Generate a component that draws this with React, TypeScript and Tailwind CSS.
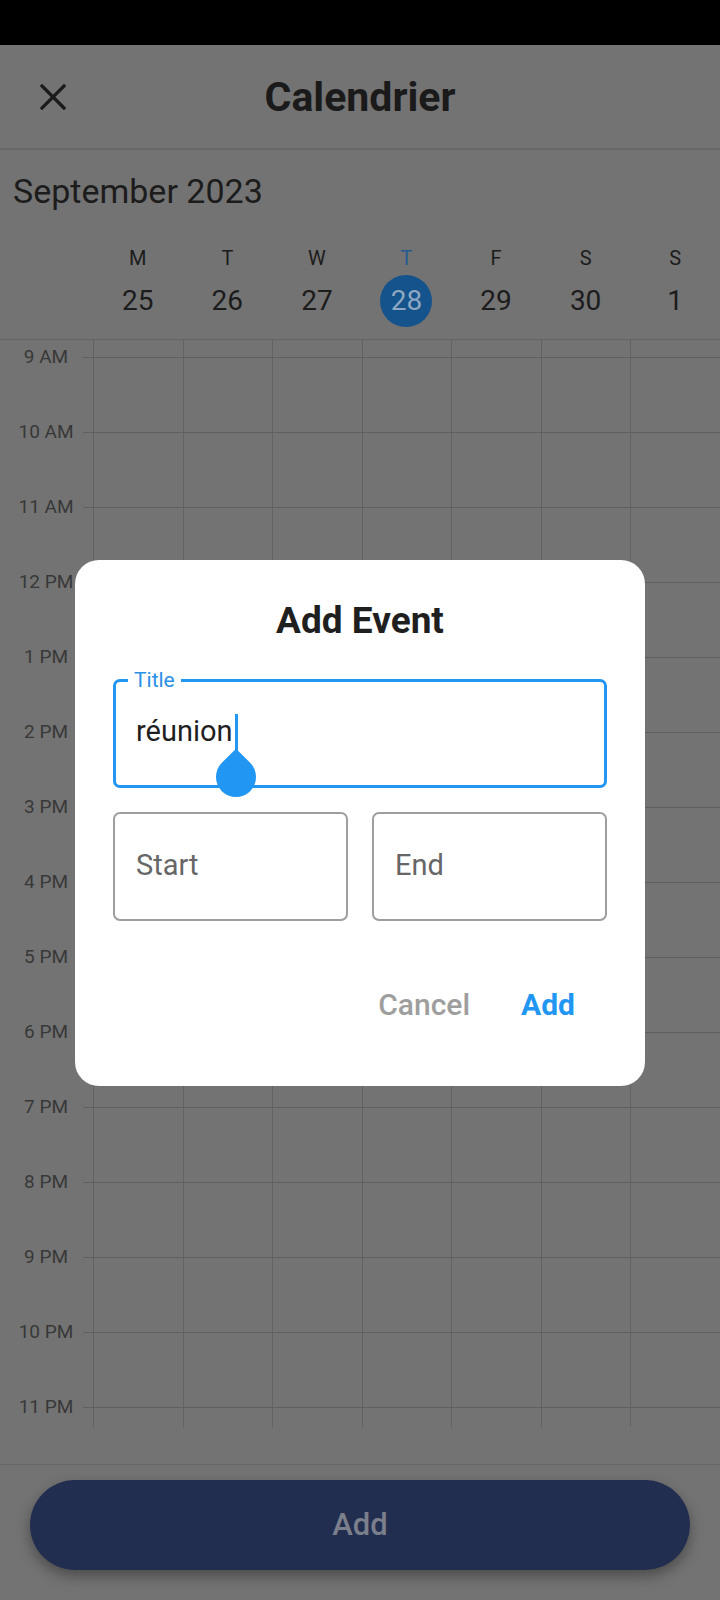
import React from 'react';

const days = [
  { letter: 'M', num: '25' },
  { letter: 'T', num: '26' },
  { letter: 'W', num: '27' },
  { letter: 'T', num: '28', today: true },
  { letter: 'F', num: '29' },
  { letter: 'S', num: '30' },
  { letter: 'S', num: '1' },
];

const hours = ['9 AM', '10 AM', '11 AM', '12 PM', '1 PM', '2 PM', '3 PM', '4 PM', '5 PM', '6 PM', '7 PM', '8 PM', '9 PM', '10 PM', '11 PM'];

function DayCells() {
  return (
    <div className="flex-1 grid grid-cols-7 h-full">
      {days.map((d, i) => (
        <div key={i} className="border-l border-[#626262] h-full" />
      ))}
    </div>
  );
}

function HourRow({ label, height }: { label: string; height: string }) {
  return (
    <div className={`flex ${height}`}>
      <div className="w-[83px] pl-[9px] text-center relative">
        <span className="block -translate-y-1/2 text-[19px] leading-[22px] text-[#383838]">{label}</span>
      </div>
      <div className="flex-1 flex border-t border-[#5f5f5f]">
        <div className="w-[10px]" />
        <DayCells />
      </div>
    </div>
  );
}

export default function App() {
  return (
    <div className="relative w-[720px] h-[1600px] bg-[#737373] overflow-hidden flex flex-col font-['Roboto',sans-serif]">
      {/* status bar */}
      <div className="h-[45px] bg-black shrink-0" />

      {/* app bar */}
      <div className="h-[105px] shrink-0 grid grid-cols-[105px_1fr_105px] items-center border-b-2 border-[#676767]">
        <div className="flex justify-center">
          <svg width="26" height="26" viewBox="0 0 26 26" fill="none" stroke="#1a1a1a" strokeWidth="3.2" strokeLinecap="square">
            <path d="M2 2 L24 24 M24 2 L2 24" />
          </svg>
        </div>
        <h1 className="text-center text-[41px] leading-[48px] font-bold text-[#1a1a1a]">Calendrier</h1>
        <div />
      </div>

      {/* month + week header */}
      <div className="shrink-0 border-b border-[#656565]">
        <div className="pt-[21px] pl-[13px] text-[34px] leading-[40px] text-[#1c1c1c]">September 2023</div>
        <div className="pl-[93px] grid grid-cols-7 pt-[35px] pb-[12px]">
          {days.map((d, i) => (
            <div key={i} className="flex flex-col items-center">
              <span className={`text-[20px] leading-[24px] ${d.today ? 'text-[#245a91]' : 'text-[#1c1c1c]'}`}>{d.letter}</span>
              <span
                className={`mt-[5px] w-[52px] h-[52px] rounded-full flex items-center justify-center text-[28px] ${
                  d.today ? 'bg-[#14538b] text-[#8ea7c2]' : 'text-[#1c1c1c]'
                }`}
              >
                {d.num}
              </span>
            </div>
          ))}
        </div>
      </div>

      {/* hour grid */}
      <div className="shrink-0 flex flex-col">
        <div className="flex h-[17px]">
          <div className="w-[83px]" />
          <div className="flex-1 flex">
            <div className="w-[10px]" />
            <DayCells />
          </div>
        </div>
        {hours.map((h, i) => (
          <HourRow key={h} label={h} height={i === hours.length - 1 ? 'h-[20px]' : 'h-[75px]'} />
        ))}
      </div>

      {/* bottom bar */}
      <div className="mt-[37px] border-t border-[#676767] pt-[15px] px-[30px]">
        <button className="w-full h-[90px] rounded-full bg-[#222e4f] text-[31px] font-medium text-[#7b7f8b] shadow-[0_6px_14px_rgba(0,0,0,0.35)]">
          Add
        </button>
      </div>

      {/* dialog */}
      <div className="absolute inset-x-0 top-[45px] bottom-0 flex items-center justify-center">
        <div className="w-[570px] bg-white rounded-[24px] px-[38px] pt-[39px] pb-[63px]">
          <h2 className="text-center text-[37px] leading-[44px] font-bold text-[#1f1f1f]">Add Event</h2>

          <div className="mt-[36px] relative h-[109px] border-[3px] border-[#2196f3] rounded-[7px] flex items-center pl-[20px] pb-[3px]">
            <span className="absolute -top-[14px] left-[12px] bg-white px-[6px] text-[21px] leading-[24px] text-[#2a8fe6]">Title</span>
            <span className="text-[29px] leading-[36px] text-[#1f1f1f] -mt-[2px]">réunion</span>
            <span className="relative inline-block w-[3px] h-[37px] bg-[#2196f3] ml-[2px] mt-[2px]">
              <span className="absolute top-[calc(100%+6px)] left-1/2 -ml-[20px] w-[40px] h-[40px] bg-[#2196f3] rotate-45 rounded-[0_50%_50%_50%]" />
            </span>
          </div>

          <div className="mt-[24px] grid grid-cols-2 gap-[24px]">
            <div className="h-[109px] border-2 border-[#9e9e9e] rounded-[7px] flex items-center pl-[21px] text-[29px] text-[#666666]">Start</div>
            <div className="h-[109px] border-2 border-[#9e9e9e] rounded-[7px] flex items-center pl-[21px] text-[29px] text-[#666666]">End</div>
          </div>

          <div className="mt-[66px] flex justify-end gap-[51px] pr-[32px]">
            <button className="text-[30px] leading-[36px] font-medium text-[#9e9e9e]">Cancel</button>
            <button className="text-[30px] leading-[36px] font-bold text-[#2196f3]">Add</button>
          </div>
        </div>
      </div>
    </div>
  );
}
